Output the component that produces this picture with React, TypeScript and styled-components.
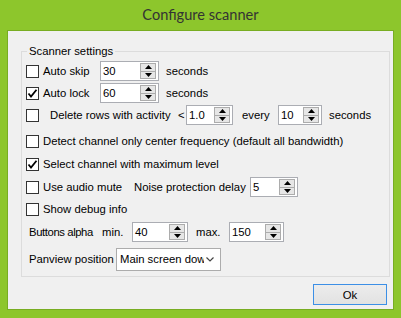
import styled, { createGlobalStyle } from "styled-components";

const GlobalStyle = createGlobalStyle`
  html, body {
    margin: 0;
    padding: 0;
    background: #8cc52c;
  }
  body {
    font-family: "Liberation Sans", Arial, sans-serif;
    font-size: 11.3px;
    color: #000;
  }
`;

const Window = styled.div`
  width: 401px;
  height: 318px;
  box-sizing: border-box;
  background: #8dc62c;
  padding: 0 7px 8px 7px;
  display: flex;
  flex-direction: column;
`;

const TitleBar = styled.div`
  height: 30px;
  display: flex;
  align-items: center;
  justify-content: center;
  font-family: Lato, "Noto Sans", sans-serif;
  font-size: 14.6px;
  color: #333;
  padding-bottom: 1px;
  box-sizing: border-box;
`;

const Client = styled.div`
  flex: 1;
  background: #f0f0f0;
  border: 1px solid #78ad22;
  display: flex;
  flex-direction: column;
  align-items: flex-start;
`;

const GroupBox = styled.fieldset`
  margin: 14px 0 0 13px;
  width: 369px;
  box-sizing: border-box;
  border: 1px solid #dcdcdc;
  padding: 2px 0 6px 4px;
  display: flex;
  flex-direction: column;
`;

const Legend = styled.legend`
  margin-left: 1px;
  padding: 0 2px;
  line-height: 13px;
`;

const Row = styled.div<{ $gap?: number; $indent?: number }>`
  height: 22px;
  margin-top: ${(p) => p.$gap ?? 0}px;
  padding-left: ${(p) => p.$indent ?? 0}px;
  display: flex;
  align-items: center;
  white-space: nowrap;
`;

const Label = styled.span<{ $w?: number; $ml?: number; $tight?: boolean }>`
  display: inline-block;
  width: ${(p) => (p.$w ? `${p.$w}px` : "auto")};
  margin-left: ${(p) => p.$ml ?? 0}px;
  letter-spacing: ${(p) => (p.$tight ? "-0.4px" : "normal")};
  flex-shrink: 0;
`;

const Box = styled.span`
  width: 13px;
  height: 13px;
  box-sizing: border-box;
  border: 1px solid #333;
  background: #fff;
  display: flex;
  align-items: center;
  justify-content: center;
  flex-shrink: 0;
  margin-right: 4px;
`;

const Check = ({ checked }: { checked?: boolean }) => (
  <Box>
    {checked && (
      <svg width="11" height="11" viewBox="0 0 11 11">
        <path d="M1.5 5.5 L4 8.5 L9.5 1.8" fill="none" stroke="#000" strokeWidth="1.8" />
      </svg>
    )}
  </Box>
);

const SpinFrame = styled.div<{ $w: number; $ml?: number }>`
  width: ${(p) => p.$w}px;
  height: 20px;
  margin-left: ${(p) => p.$ml ?? 0}px;
  box-sizing: border-box;
  border: 1px solid #abadb3;
  background: #fff;
  display: flex;
  align-items: stretch;
  padding: 1px 2px 1px 0;
  flex-shrink: 0;
`;

const SpinValue = styled.span`
  flex: 1;
  padding-left: 2px;
  display: flex;
  align-items: center;
`;

const SpinButtons = styled.div`
  width: 16px;
  display: flex;
  flex-direction: column;
`;

const SpinButton = styled.div`
  flex: 1;
  box-sizing: border-box;
  border: 1px solid #acacac;
  background: #e6e6e6;
  display: flex;
  align-items: center;
  justify-content: center;
  & + & {
    margin-top: -1px;
  }
`;

const Spin = ({ value, w, ml }: { value: string; w: number; ml?: number }) => (
  <SpinFrame $w={w} $ml={ml}>
    <SpinValue>{value}</SpinValue>
    <SpinButtons>
      <SpinButton>
        <svg width="7" height="4" viewBox="0 0 7 4">
          <path d="M0 4 L3.5 0 L7 4 Z" fill="#000" />
        </svg>
      </SpinButton>
      <SpinButton>
        <svg width="7" height="4" viewBox="0 0 7 4">
          <path d="M0 0 L3.5 4 L7 0 Z" fill="#000" />
        </svg>
      </SpinButton>
    </SpinButtons>
  </SpinFrame>
);

const Combo = styled.div`
  width: 105px;
  height: 23px;
  box-sizing: border-box;
  border: 1px solid #acacac;
  background: #fff;
  display: flex;
  align-items: center;
  padding: 0 6px 0 3px;
`;

const ComboText = styled.span`
  width: 84px;
  overflow: hidden;
  white-space: nowrap;
`;

const Footer = styled.div`
  align-self: stretch;
  display: flex;
  justify-content: flex-end;
  padding: 7px 6px 0 0;
`;

const OkButton = styled.button`
  width: 74px;
  height: 21px;
  box-sizing: border-box;
  border: 1px solid #3c8fe6;
  background: linear-gradient(#ececec, #e2e2e2);
  font-family: "Liberation Sans", Arial, sans-serif;
  font-size: 11.3px;
  color: #000;
  padding: 0;
`;

export default function App() {
  return (
    <>
      <GlobalStyle />
      <Window>
        <TitleBar>Configure scanner</TitleBar>
        <Client>
          <GroupBox>
            <Legend>Scanner settings</Legend>
            <Row>
              <Check />
              <Label $w={57}>Auto skip</Label>
              <Spin value="30" w={59} />
              <Label $ml={7}>seconds</Label>
            </Row>
            <Row>
              <Check checked />
              <Label $w={57}>Auto lock</Label>
              <Spin value="60" w={59} />
              <Label $ml={7}>seconds</Label>
            </Row>
            <Row>
              <Check />
              <Label $ml={7} $w={128}>Delete rows with activity</Label>
              <Label $w={8}>&lt;</Label>
              <Spin value="1.0" w={47} />
              <Label $ml={9} $w={36}>every</Label>
              <Spin value="10" w={44} />
              <Label $ml={7}>seconds</Label>
            </Row>
            <Row $gap={4}>
              <Check />
              <Label>Detect channel only center frequency (default all bandwidth)</Label>
            </Row>
            <Row $gap={1}>
              <Check checked />
              <Label>Select channel with maximum level</Label>
            </Row>
            <Row $gap={1}>
              <Check />
              <Label $w={91}>Use audio mute</Label>
              <Label $w={116}>Noise protection delay</Label>
              <Spin value="5" w={48} />
            </Row>
            <Row>
              <Check />
              <Label>Show debug info</Label>
            </Row>
            <Row $gap={1} $indent={3}>
              <Label $w={73} $tight>Buttons alpha</Label>
              <Label $w={30}>min.</Label>
              <Spin value="40" w={56} />
              <Label $ml={8} $w={33}>max.</Label>
              <Spin value="150" w={55} />
            </Row>
            <Row $gap={5} $indent={3}>
              <Label $w={87}>Panview position</Label>
              <Combo>
                <ComboText>Main screen down</ComboText>
                <svg width="8" height="5" viewBox="0 0 8 5" style={{ marginLeft: "auto" }}>
                  <path d="M0.5 0.5 L4 4 L7.5 0.5" fill="none" stroke="#444" strokeWidth="1.2" />
                </svg>
              </Combo>
            </Row>
          </GroupBox>
          <Footer>
            <OkButton>Ok</OkButton>
          </Footer>
        </Client>
      </Window>
    </>
  );
}
